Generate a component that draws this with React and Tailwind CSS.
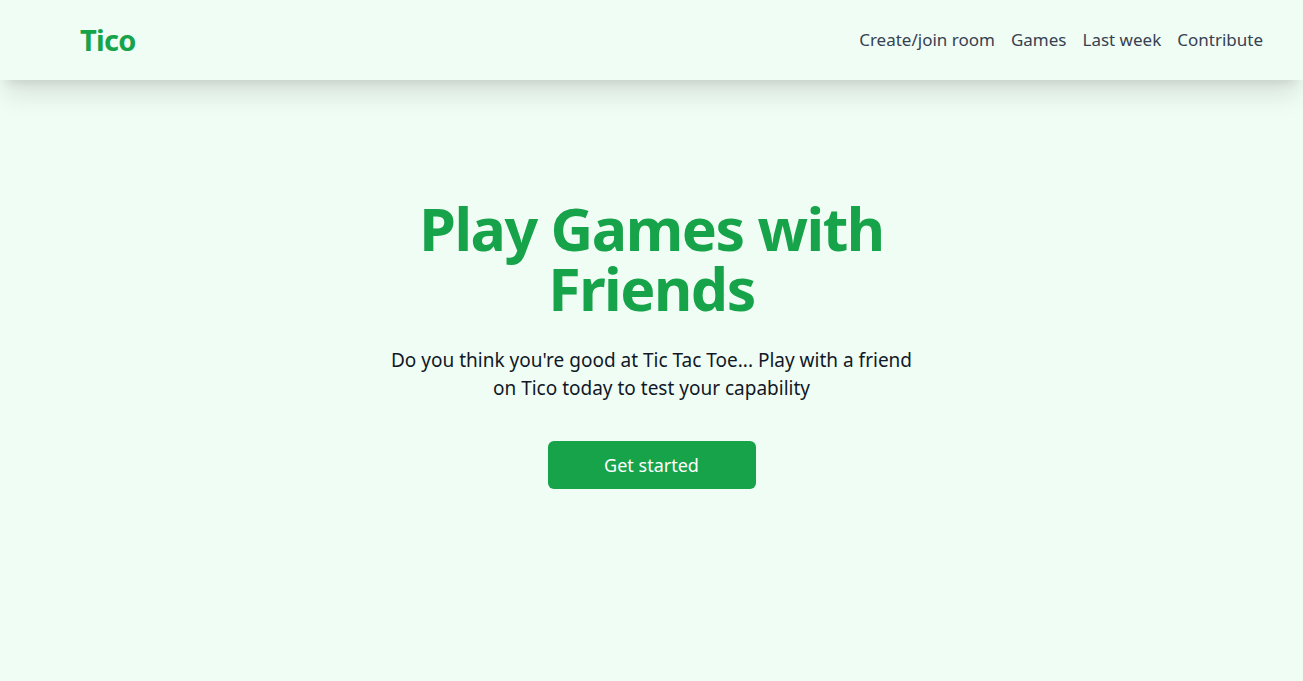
export default function App() {
  return (
    <div
      className="min-h-screen bg-[#f0fdf4]"
      style={{ fontFamily: '"Noto Sans", "Open Sans", sans-serif' }}
    >
      {/* Nav */}
      <header className="h-20 bg-[#f0fdf4] shadow-xl flex items-center justify-between pl-20 pr-10">
        <a href="#" className="text-[29px] font-bold text-[#16a34a] tracking-tight">
          Tico
        </a>
        <nav className="flex items-center gap-4 text-[17px] text-[#374151]">
          <a href="#">Create/join room</a>
          <a href="#">Games</a>
          <a href="#">Last week</a>
          <a href="#">Contribute</a>
        </nav>
      </header>

      {/* Hero */}
      <main className="flex flex-col items-center text-center pt-[118px]">
        <h1 className="text-[59px] leading-[60px] font-bold text-[#16a34a] tracking-tight">
          Play Games with
          <br />
          Friends
        </h1>
        <p className="mt-7 text-[19px] leading-7 text-[#111827]">
          Do you think you're good at Tic Tac Toe... Play with a friend
          <br />
          on Tico today to test your capability
        </p>
        <button className="mt-[39px] w-52 h-12 rounded-md bg-[#16a34a] text-white text-lg">
          Get started
        </button>
      </main>
    </div>
  );
}
